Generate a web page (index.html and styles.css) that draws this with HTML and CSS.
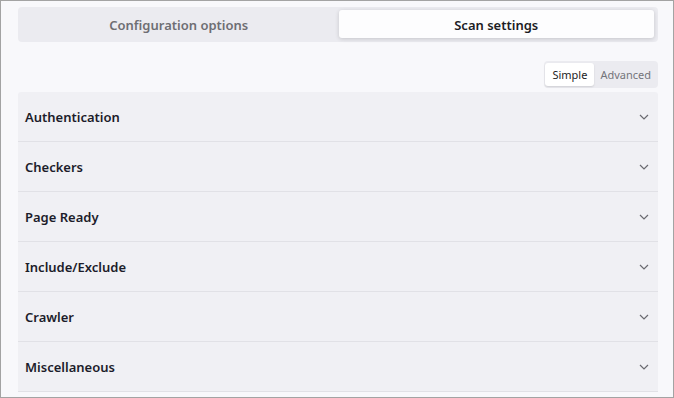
FILE: index.html
```html
<!DOCTYPE html>
<html lang="en">
<head>
    <meta charset="UTF-8">
    <title>Scan settings</title>
    <link rel="stylesheet" href="styles.css">
</head>
<body>
    <div class="window">
        <div class="tabs">
            <button class="tab">Configuration options</button>
            <button class="tab active">Scan settings</button>
        </div>

        <div class="mode-row">
            <div class="mode-switch">
                <button class="mode active">Simple</button>
                <button class="mode">Advanced</button>
            </div>
        </div>

        <div class="accordion">
            <div class="section"><span>Authentication</span><svg class="chevron" viewBox="0 0 10 6"><path d="M1 1l4 4 4-4"/></svg></div>
            <div class="section"><span>Checkers</span><svg class="chevron" viewBox="0 0 10 6"><path d="M1 1l4 4 4-4"/></svg></div>
            <div class="section"><span>Page Ready</span><svg class="chevron" viewBox="0 0 10 6"><path d="M1 1l4 4 4-4"/></svg></div>
            <div class="section"><span>Include/Exclude</span><svg class="chevron" viewBox="0 0 10 6"><path d="M1 1l4 4 4-4"/></svg></div>
            <div class="section"><span>Crawler</span><svg class="chevron" viewBox="0 0 10 6"><path d="M1 1l4 4 4-4"/></svg></div>
            <div class="section"><span>Miscellaneous</span><svg class="chevron" viewBox="0 0 10 6"><path d="M1 1l4 4 4-4"/></svg></div>
        </div>
    </div>
</body>
</html>
```

FILE: styles.css
```css
html, body {
    margin: 0;
    height: 100%;
}
body {
    font-family: 'Noto Sans', 'Open Sans', sans-serif;
    background-color: #ffffff;
}
.window {
    box-sizing: border-box;
    height: 398px;
    border: 1px solid #a3a3a3;
    background-color: #f8f8fb;
    padding: 6px 15px 0 17px;
    overflow: hidden;
}
.tabs {
    display: flex;
    gap: 2px;
    height: 35px;
    box-sizing: border-box;
    padding: 3px 4px 4px 3px;
    background-color: #ebebf0;
    border-radius: 4px;
}
.tab {
    flex: 1;
    border: none;
    background: transparent;
    font-family: inherit;
    font-size: 13px;
    font-weight: 600;
    color: #6e6e73;
    border-radius: 3px;
    padding: 2px 0 0;
}
.tab.active {
    background-color: #fdfdfe;
    color: #1c1c24;
    box-shadow: 0 1px 4px rgba(0, 0, 0, 0.16);
}
.mode-row {
    display: flex;
    justify-content: flex-end;
    padding: 19px 0 4px;
}
.mode-switch {
    display: flex;
    padding: 2px 1px;
    background-color: #ebebf0;
    border-radius: 4px;
}
.mode {
    border: none;
    background: transparent;
    font-family: inherit;
    font-size: 11px;
    color: #74747a;
    height: 23px;
    padding: 0 6px;
    border-radius: 3px;
}
.mode.active {
    background-color: #ffffff;
    color: #1c1c24;
    padding: 0 7px;
    box-shadow: 0 1px 2px rgba(0, 0, 0, 0.12);
}
.accordion {
    background-color: #f0f0f4;
    border-radius: 3px 3px 0 0;
}
.section {
    display: flex;
    align-items: center;
    justify-content: space-between;
    height: 49px;
    padding: 0 9px 0 7px;
    border-bottom: 1px solid #e1e1e6;
    font-size: 13px;
    font-weight: 600;
    color: #1c1c2a;
}
.chevron {
    width: 10px;
    height: 6px;
    fill: none;
    stroke: #6a6a70;
    stroke-width: 1.2;
}
```
